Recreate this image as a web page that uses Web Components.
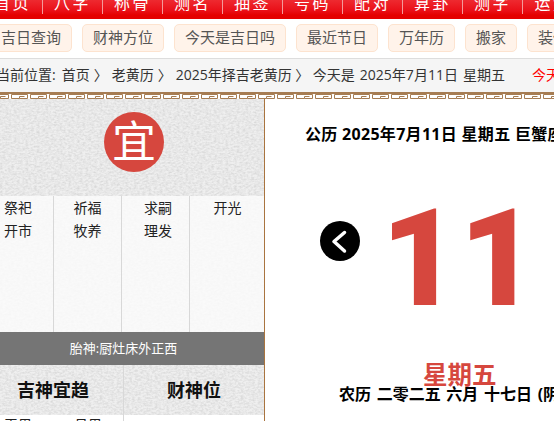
<!DOCTYPE html>
<html>
<head>
<meta charset="utf-8">
<style>
  html, body { margin: 0; height: 100%; overflow: hidden; background: #fff; }
</style>
</head>
<body>
<almanac-page></almanac-page>

<script>
const FONT = '"Open Sans", "Noto Sans CJK SC", sans-serif'
const RED = '#d6473e'

// paper texture for the left panel, an svg turbulence and no raster
const paper = (lo, hi) => {
  const svg = `<svg xmlns='http://www.w3.org/2000/svg' width='200' height='200'><filter id='n'><feTurbulence type='fractalNoise' baseFrequency='0.35 0.55' numOctaves='2' seed='4'/><feColorMatrix values='0 0 0 0 0 0 0 0 0 0 0 0 0 0 0 0.9 0 0 0 -0.3'/></filter><rect width='200' height='200' fill='${hi}'/><rect width='200' height='200' filter='url(#n)' opacity='${lo}'/></svg>`
  return `url("data:image/svg+xml,${encodeURIComponent(svg)}")`
}

// top red menu, the page is scrolled so its text is cut at the top
customElements.define('top-nav', class TopNav extends HTMLElement {
  constructor() {
    super()
    const items = ['首页', '八字', '称骨', '测名', '抽签', '号码', '配对', '算卦', '测字', '运势']
    this.attachShadow({ mode: 'open' }).innerHTML = `
      <style>
        :host {
          display: flex;
          height: 19px;
          overflow: hidden;
          margin-left: -17px;
          background: linear-gradient(#ee2a30, #ea1018 55%, #e40000 80%);
        }
        span {
          flex: none;
          box-sizing: border-box;
          width: 60px;
          height: 14px;
          border-right: 1px solid #f49a9a;
          line-height: 7px;
          text-align: center;
          color: #fff;
          font-size: 16px;
          letter-spacing: 2.500px;
        }
        span:last-child { border: 0; }
      </style>
      ${items.map(i => `<span>${i}</span>`).join('')}
    `
  }
})

customElements.define('tag-row', class TagRow extends HTMLElement {
  constructor() {
    super()
    this.attachShadow({ mode: 'open' }).innerHTML = `
      <style>
        :host {
          display: flex;
          gap: 10px;
          height: 28px;
          padding: 5px 0 6px;
          margin-left: -10px;
          overflow: hidden;
        }
      </style>
      <slot></slot>
    `
  }
})

customElements.define('tag-link', class TagLink extends HTMLElement {
  constructor() {
    super()
    this.attachShadow({ mode: 'open' }).innerHTML = `
      <style>
        :host {
          display: block;
          flex: none;
          box-sizing: border-box;
          height: 28px;
          padding: 0 10px;
          line-height: 25px;
          font-size: 15px;
          white-space: nowrap;
          color: #555;
          background: #fff3ea;
          border: 1px solid #fde3cf;
          border-radius: 5px;
        }
      </style>
      <slot></slot>
    `
  }
})

customElements.define('bread-crumb', class BreadCrumb extends HTMLElement {
  constructor() {
    super()
    this.attachShadow({ mode: 'open' }).innerHTML = `
      <style>
        :host {
          display: flex;
          box-sizing: border-box;
          height: 34px;
          line-height: 31px;
          font-size: 14px;
          white-space: nowrap;
          overflow: hidden;
          color: #333;
          background: #f5f5f5;
          border-top: 1px solid #ddd;
        }
        span { flex: none; }
        .start { margin-left: -4px; }
        .sep { width: 22px; text-align: center; }
        .last { width: 21px; }
        .today { word-spacing: 1.500px; }
        .hot { color: #f00; margin-left: 27px; }
      </style>
      <span class="start">当前位置:</span>
      <span style="margin-left:6px">首页</span>
      <span class="sep">〉</span>
      <span>老黄历</span>
      <span class="sep">〉</span>
      <span>2025年择吉老黄历</span>
      <span class="sep last">〉</span>
      <span class="today">今天是 2025年7月11日 星期五</span>
      <span class="hot">今天是吉日吗</span>
    `
  }
})

// the key pattern strip, one tile repeated
customElements.define('fret-strip', class FretStrip extends HTMLElement {
  constructor() {
    super()
    const tile = `<svg xmlns='http://www.w3.org/2000/svg' width='19' height='5'><path d='M0 .5H11.500V4.500H3.500V2.500H8.500M14.500 4.500V.5H19M14.500 4.500H19M0 4.500H3.500' fill='none' stroke='#a67c52'/></svg>`
    this.attachShadow({ mode: 'open' }).innerHTML = `
      <style>
        :host {
          display: block;
          height: 5px;
          border-top: 2px solid #a67c52;
          background: url("data:image/svg+xml,${encodeURIComponent(tile)}") -3px 0 repeat-x;
          background-origin: content-box;
        }
      </style>
    `
  }
})

// left column
customElements.define('yi-panel', class YiPanel extends HTMLElement {
  constructor() {
    super()
    const cols = [['祭祀', '开市'], ['祈福', '牧养'], ['求嗣', '理发'], ['开光']]
    this.attachShadow({ mode: 'open' }).innerHTML = `
      <style>
        :host {
          display: block;
          flex: none;
          box-sizing: border-box;
          width: 265px;
          overflow: hidden;
          border-right: 1px solid #a9743f;
        }
        .in { width: 281px; margin-left: -17px; }
        .head {
          box-sizing: border-box;
          height: 97px;
          padding: 13px 0 0 121px;
          background: ${paper(0.2, '#efefef')};
        }
        .seal {
          width: 60px;
          height: 60px;
          border-radius: 50%;
          background: ${RED};
          color: #fff;
          font-size: 44px;
          line-height: 58px;
          text-align: center;
        }
        .cols {
          display: grid;
          grid-template-columns: 71px 68px 68px 74px;
          height: 136px;
          background: ${paper(0.03, '#fafafa')};
        }
        .cols div {
          border-right: 1px solid #d8d8d8;
          text-align: center;
          font-size: 14px;
          line-height: 23px;
          color: #222;
        }
        .cols div:nth-child(3) { padding-left: 5px; }
        .cols div:last-child { border: 0; padding-left: 1px; }
        .fetal {
          height: 33px;
          line-height: 33px;
          text-align: center;
          font-size: 13px;
          color: #fff;
          background: #757575;
        }
        .two {
          display: grid;
          grid-template-columns: 141px 140px;
          height: 56px;
        }
        .two > div { border-right: 1px solid #d8d8d8; }
        .two > div:last-child { border: 0; }
        .two h3 {
          height: 50px;
          margin: 0;
          line-height: 50px;
          text-align: center;
          font-size: 18px;
          color: #111;
          background: ${paper(0.2, '#efefef')};
        }
        .two p {
          margin: 0;
          display: flex;
          justify-content: space-around;
          font-size: 14px;
          line-height: 20px;
          color: #222;
        }
      </style>
      <div class="in">
        <div class="head"><div class="seal">宜</div></div>
        <div class="cols">${cols.map(c => `<div>${c.join('<br>')}</div>`).join('')}</div>
        <div class="fetal">胎神:厨灶床外正西</div>
        <div class="two">
          <div><h3>吉神宜趋</h3><p><span>天恩</span><span>月恩</span></p></div>
          <div><h3>财神位</h3></div>
        </div>
      </div>
    `
  }
})

// right column with the big day number
customElements.define('day-panel', class DayPanel extends HTMLElement {
  constructor() {
    super()
    this.attachShadow({ mode: 'open' }).innerHTML = `
      <style>
        :host {
          display: block;
          flex: 1;
          min-width: 0;
          overflow: hidden;
          white-space: nowrap;
        }
        .solar {
          margin: 24px 0 0 40px;
          line-height: 22px;
          font-size: 16px;
          font-weight: 700;
          letter-spacing: .3px;
          color: #000;
        }
        .mid {
          display: flex;
          height: 178px;
          margin-top: 21px;
          padding-left: 55px;
        }
        .prev {
          flex: none;
          width: 40px;
          height: 40px;
          margin: 55px 21px 0 0;
          border-radius: 50%;
          background: #000;
        }
        .prev svg { display: block; }
        .num {
          font-family: Roboto, sans-serif;
          font-size: 135px;
          font-weight: 900;
          line-height: 178px;
          margin-top: 4px;
          color: ${RED};
        }
        .week {
          margin: 19px 0 0 158px;
          line-height: 24px;
          font-size: 24.500px;
          font-weight: 700;
          color: ${RED};
        }
        .lunar {
          margin: 0 0 0 74px;
          line-height: 14px;
          font-size: 16px;
          font-weight: 700;
          word-spacing: 1.500px;
          color: #000;
        }
      </style>
      <div class="solar">公历 2025年7月11日 星期五 巨蟹座</div>
      <div class="mid">
        <div class="prev"><svg width="40" height="40" viewBox="0 0 40 40"><path d="M24.500 11.500L14 20.500 24.500 30" fill="none" stroke="#fff" stroke-width="3.500" stroke-linecap="round" stroke-linejoin="round"/></svg></div>
        <div class="num">11</div>
      </div>
      <div class="week">星期五</div>
      <div class="lunar">农历 二零二五 六月 十七日 (阴历)</div>
    `
  }
})

customElements.define('almanac-page', class AlmanacPage extends HTMLElement {
  constructor() {
    super()
    this.attachShadow({ mode: 'open' }).innerHTML = `
      <style>
        :host {
          display: block;
          height: 421px;
          overflow: hidden;
          font-family: ${FONT};
        }
        .body { display: flex; height: 322px; }
      </style>
      <top-nav></top-nav>
      <tag-row>
        <tag-link>吉日查询</tag-link>
        <tag-link>财神方位</tag-link>
        <tag-link>今天是吉日吗</tag-link>
        <tag-link>最近节日</tag-link>
        <tag-link>万年历</tag-link>
        <tag-link>搬家</tag-link>
        <tag-link>装修</tag-link>
      </tag-row>
      <bread-crumb></bread-crumb>
      <fret-strip></fret-strip>
      <div class="body">
        <yi-panel></yi-panel>
        <day-panel></day-panel>
      </div>
    `
  }
})
</script>
</body>
</html>
